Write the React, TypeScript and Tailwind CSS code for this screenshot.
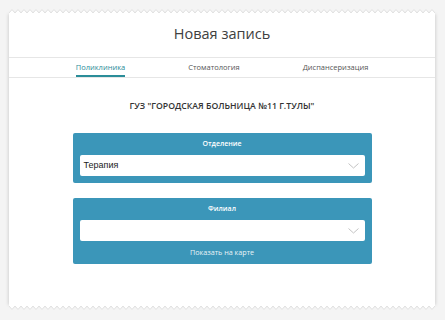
import React from "react";

function Zigzag({ dir, id }: { dir: "up" | "down"; id: string }) {
  const d = dir === "up" ? "M0 4 L3 0.5 L6 4 Z" : "M0 0 L3 3.5 L6 0 Z";
  const s = dir === "up" ? "M0 4 L3 0.5 L6 4" : "M0 0 L3 3.5 L6 0";
  return (
    <svg width="426" height="4" className="block">
      <defs>
        <pattern id={id} width="6" height="4" patternUnits="userSpaceOnUse">
          <path d={d} fill="#ffffff" />
          <path d={s} fill="none" stroke="#d9d9d9" strokeWidth="0.8" />
        </pattern>
      </defs>
      <rect width="426" height="4" fill={`url(#${id})`} />
    </svg>
  );
}

function Chevron() {
  return (
    <svg width="11" height="6" viewBox="0 0 11 6" className="absolute right-[6px] top-[8px]">
      <path d="M0.5 0.5 L5.5 5 L10.5 0.5" fill="none" stroke="#c4c4c4" strokeWidth="1" />
    </svg>
  );
}

function Select({ value }: { value?: string }) {
  return (
    <div className="relative h-[21px] bg-white rounded-[2px] flex items-center pl-[4px] text-[9px] text-[#222] font-['Liberation_Sans',Arial,sans-serif]">
      {value}
      <Chevron />
    </div>
  );
}

export default function App() {
  return (
    <div className="w-[445px] h-[320px] bg-[#f4f4f4] pt-[9px] pl-[9px] font-['Open_Sans',sans-serif] overflow-hidden">
      <div className="w-[426px]">
        <Zigzag dir="up" id="zt" />
        <div className="bg-white h-[293px] shadow-[-2px_0_3px_-1px_rgba(0,0,0,0.13),2px_0_3px_-1px_rgba(0,0,0,0.13)] flex flex-col">
          <div className="h-[44px] flex items-center justify-center text-[14.5px] text-[#404040] pb-[3px]">
            Новая запись
          </div>
          <div className="h-[21px] border-y border-[#e6e6e6] flex justify-center gap-[63px] text-[7.5px] text-[#555]">
            <div className="relative flex items-center text-[#2a8c99]">
              Поликлиника
              <div className="absolute left-0 right-0 bottom-[0px] h-[2px] bg-[#2b8d99]" />
            </div>
            <div className="flex items-center">Стоматология</div>
            <div className="flex items-center">Диспансеризация</div>
          </div>
          <div className="pt-[22px] text-center text-[8.7px] font-semibold text-[#333] leading-[12px]">
            ГУЗ "ГОРОДСКАЯ БОЛЬНИЦА №11 Г.ТУЛЫ"
          </div>
          <div className="w-[299px] mx-auto mt-[21px] bg-[#3b96b9] rounded-[2px] px-[7px] pb-[7px]">
            <div className="h-[22px] flex items-center justify-center text-[7px] font-semibold text-white">
              Отделение
            </div>
            <Select value="Терапия" />
          </div>
          <div className="w-[299px] mx-auto mt-[15px] bg-[#3b96b9] rounded-[2px] px-[7px]">
            <div className="h-[22px] flex items-center justify-center text-[7px] font-semibold text-white">
              Филиал
            </div>
            <Select />
            <div className="h-[23px] flex items-center justify-center text-[7.2px] text-[#e8f3f7]">
              Показать на карте
            </div>
          </div>
        </div>
        <Zigzag dir="down" id="zb" />
      </div>
    </div>
  );
}
